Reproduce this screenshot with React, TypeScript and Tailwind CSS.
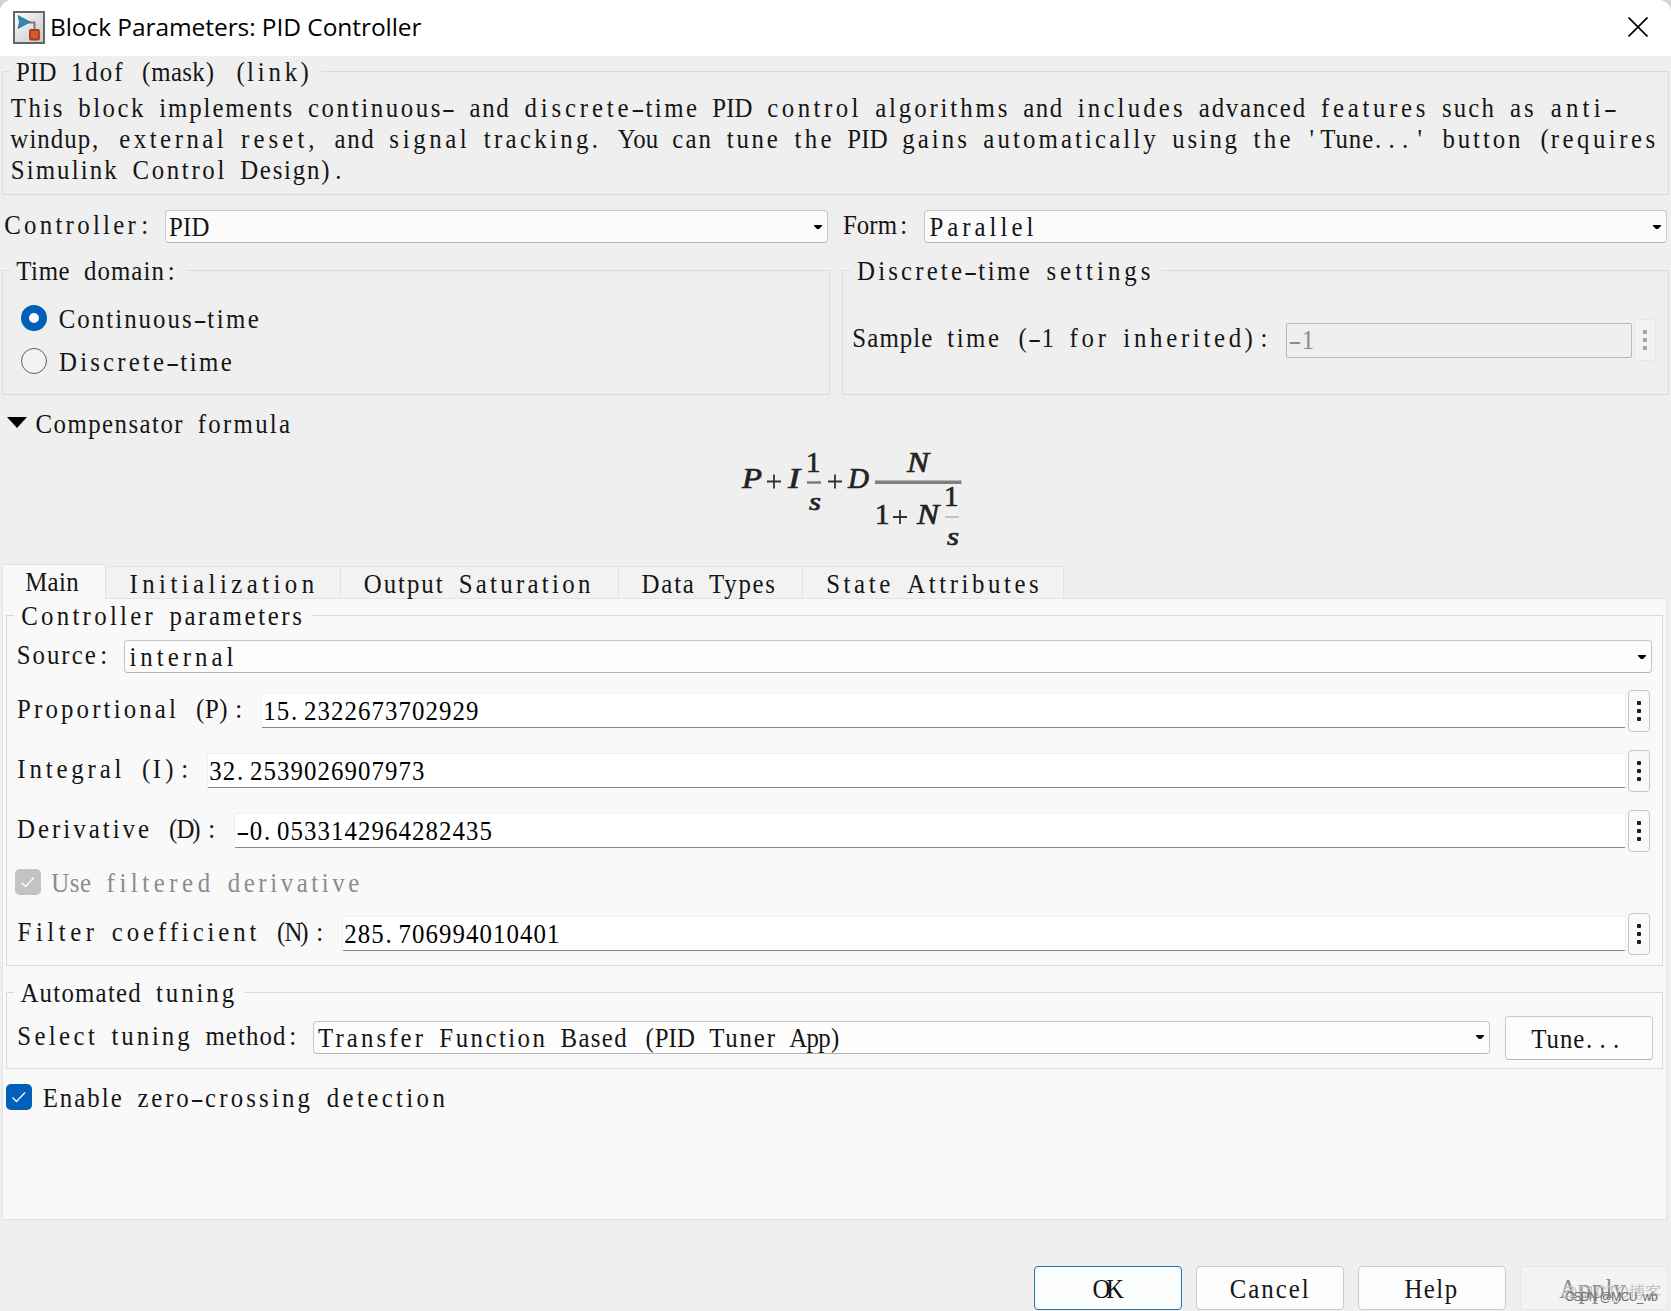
import { ReactNode } from "react";
import clsx from "clsx";

// Dialog text sits on a fixed grid: every character takes one 13.5px cell
const CELL = 13.5;
const SQUEEZE = 0.92;
const ctx = document.createElement("canvas").getContext("2d")!;

function measure(token: string) {
  ctx.font = '27px "Liberation Serif"';
  return ctx.measureText(token).width;
}

function align(token: string) {
  if (token === "(") return 0.85;
  if (token === ")" || token === "." || token === ",") return 0.15;
  if (token === ":") return 0.5;
  return 0.35;
}

function Mono({ children, className }: { children: string; className?: string }) {
  const tokens = children.match(/\w+|\s|[^\w\s]/g) ?? [];
  return (
    <span
      className={clsx("inline-block shrink-0 whitespace-pre", className)}
      style={{ width: children.length * CELL }}
    >
      <span className="-ml-px inline-block origin-left scale-x-[0.92]">
        {tokens.map((token, i) => {
          if (token === "-") {
            return (
              <span key={i} className="inline-block text-center" style={{ width: CELL / SQUEEZE }}>
                <span className="inline-block scale-x-[1.6]">-</span>
              </span>
            );
          }
          const spacing = (token.length * CELL) / SQUEEZE - measure(token);
          const each = spacing / token.length;
          const shift = each * align(token);
          return (
            <span key={i} style={{ letterSpacing: each, marginLeft: shift, marginRight: -shift }}>
              {token}
            </span>
          );
        })}
      </span>
    </span>
  );
}

function Group({ title, className, children }: { title: string; className?: string; children: ReactNode }) {
  return (
    <fieldset className={clsx("min-w-0 border border-[#dadada]", className)}>
      <legend className="ml-[7px] h-[31px] px-[7px] leading-[33px]">
        <Mono>{title}</Mono>
      </legend>
      {children}
    </fieldset>
  );
}

function Select({ value, className }: { value: string; className?: string }) {
  return (
    <div
      className={clsx(
        "flex h-[33px] min-w-0 flex-1 items-center justify-between rounded-[4px] border border-[#c6c6c6] border-b-[#b4b4b4] pl-[4px] pr-[5px]",
        className ?? "bg-[#fdfdfd]"
      )}
    >
      <Mono className="h-[31px] leading-[33px]">{value}</Mono>
      <svg width="8" height="4" viewBox="0 0 8 4">
        <path d="M0 0h8v1L5 4H3L0 1z" fill="#000" />
      </svg>
    </div>
  );
}

function MoreButton({ disabled }: { disabled?: boolean }) {
  return (
    <button
      className={clsx(
        "flex h-[42px] w-[22px] shrink-0 flex-col items-center justify-center gap-[4px] rounded-[4px] border",
        disabled ? "border-[#e6e6e6] bg-[#f3f3f3]" : "border-[#c6c6c6] bg-[#f9f9f9]"
      )}
    >
      {[0, 1, 2].map((n) => (
        <span
          key={n}
          className={clsx("size-[4px] rounded-[1px]", disabled ? "bg-[#a2a2a2]" : "bg-[#1c1c1c]")}
        />
      ))}
    </button>
  );
}

function ParamRow({ label, value, className }: { label: string; value: string; className?: string }) {
  return (
    <div className={clsx("flex h-[42px] items-center pl-[10px] pr-[12px]", className)}>
      <Mono className="pb-[4px]">{label}</Mono>
      <div className="mb-[2px] ml-[14px] mr-[2px] flex h-[35px] min-w-0 flex-1 items-center rounded-[2px] border border-[#efefef] border-b-[#868686] bg-white pl-[2px]">
        <Mono className="pt-[2px] text-black">{value}</Mono>
      </div>
      <MoreButton />
    </div>
  );
}

function Checkbox({ label, disabled, className }: { label: string; disabled?: boolean; className?: string }) {
  return (
    <label className={clsx("flex h-[26px] items-center gap-[11px]", className)}>
      <span
        className={clsx(
          "flex size-[26px] shrink-0 items-center justify-center rounded-[5px]",
          disabled ? "bg-[#c3c3c3]" : "bg-[#005fb8]"
        )}
      >
        <svg width="16" height="14" viewBox="0 0 16 14" fill="none" stroke="#fff" strokeWidth="1.3">
          <path d="M1.5 7.5l4 4L14 2.5" />
        </svg>
      </span>
      <Mono className={disabled ? "pt-[2px] text-[#8c8c8c]" : "pt-[2px]"}>{label}</Mono>
    </label>
  );
}

function Radio({ label, checked }: { label: string; checked?: boolean }) {
  return (
    <label className="flex h-[43px] items-center gap-[12px] pl-[18px]">
      <span
        className={clsx(
          "size-[26px] rounded-full",
          checked ? "border-[8px] border-[#005fb8] bg-white" : "border border-[#5f5f5f] bg-[#f3f3f3]"
        )}
      />
      <Mono className="pt-[3px]">{label}</Mono>
    </label>
  );
}

function Formula() {
  return (
    <svg width="230" height="104" viewBox="738 446 230 104" className="font-['Liberation_Serif',serif]">
      <g fill="#222" stroke="#222" strokeWidth="0.7" fontSize="29">
        <g fontStyle="italic">
          <text x="742" y="488" textLength="20" lengthAdjust="spacingAndGlyphs">P</text>
          <text x="788" y="488" textLength="12" lengthAdjust="spacingAndGlyphs">I</text>
          <text x="848" y="488">D</text>
          <text x="907" y="472" textLength="22" lengthAdjust="spacingAndGlyphs">N</text>
          <text x="917" y="524" textLength="22" lengthAdjust="spacingAndGlyphs">N</text>
          <text x="809" y="510" fontSize="26" textLength="12" lengthAdjust="spacingAndGlyphs">s</text>
          <text x="947" y="545" fontSize="26" textLength="12" lengthAdjust="spacingAndGlyphs">s</text>
        </g>
        <text x="806" y="472">1</text>
        <text x="875" y="524">1</text>
        <text x="944" y="506">1</text>
      </g>
      <path d="M767 481.5h14M774 474.5v14M828 481.5h14M835 474.5v14M893 517h14M900 510v14" stroke="#333" strokeWidth="1.8" />
      <path d="M807 482.5h14" stroke="#777" strokeWidth="2.4" />
      <path d="M875 482.2h86.5" stroke="#808080" strokeWidth="3.4" />
      <path d="M945 517h14" stroke="#b5b5b5" strokeWidth="1.5" />
    </svg>
  );
}

function BlockIcon() {
  return (
    <svg width="32" height="33" viewBox="0 0 32 33">
      <defs>
        <linearGradient id="plate" x1="0" y1="0" x2="1" y2="1">
          <stop offset="0" stopColor="#fff" />
          <stop offset="1" stopColor="#c4c4c4" />
        </linearGradient>
      </defs>
      <rect x="1" y="1" width="30" height="31" fill="url(#plate)" stroke="#666" strokeWidth="2" />
      <path d="M15 11.5h6.500V19" fill="none" stroke="#777" strokeWidth="2" />
      <path d="M5 4.500l12 6.500L5 17.500l1.500-6.500z" fill="#2f86bd" stroke="#2a6a96" strokeWidth="0.800" />
      <rect x="17" y="19" width="9" height="9.500" rx="1" fill="#d9582e" stroke="#a33c18" strokeWidth="1.800" />
    </svg>
  );
}

const TABS = [
  { label: "Initialization", width: "w-[235px]" },
  { label: "Output Saturation", width: "w-[278px]" },
  { label: "Data Types", width: "w-[184px]" },
  { label: "State Attributes", width: "w-[261px]" },
];

const DESCRIPTION = [
  "This block implements continuous- and discrete-time PID control algorithms and includes advanced features such as anti-",
  "windup, external reset, and signal tracking. You can tune the PID gains automatically using the 'Tune...' button (requires",
  "Simulink Control Design).",
];

const BUTTON = "flex w-[148px] shrink-0 items-center justify-center rounded-[4px] border pt-[2px]";

export default function App() {
  return (
    <div className="h-[1311px] w-[1671px] overflow-hidden bg-[#d4d4d4]">
      <div className="flex h-full flex-col overflow-hidden rounded-t-[12px] bg-[#efefef] font-['Liberation_Serif','Noto_Sans_CJK_SC',serif] text-[27px] leading-[32px] text-[#151515]">
        <header className="flex h-[56px] shrink-0 items-center justify-between bg-white pb-[2px] pl-[13px] pr-[23px]">
          <div className="flex items-center">
            <BlockIcon />
            <h1 className="ml-[5px] whitespace-nowrap font-['Open_Sans',sans-serif] text-[24.5px] tracking-[-0.07px] text-black">
              Block Parameters: PID Controller
            </h1>
          </div>
          <svg width="20" height="20" viewBox="0 0 20 20" stroke="#000" strokeWidth="1.7">
            <path d="M0.5 0.5l19 19M19.5 0.5l-19 19" />
          </svg>
        </header>

        <Group title="PID 1dof (mask) (link)" className="ml-[2px] mr-[2px] h-[139px] shrink-0">
          <div className="flex flex-col pl-[8px] pt-[6px]">
            {DESCRIPTION.map((line) => (
              <Mono key={line} className="leading-[31px]">{line}</Mono>
            ))}
          </div>
        </Group>

        <div className="mt-[15px] flex h-[33px] shrink-0">
          <div className="flex w-[828px] gap-[12px] pl-[4px]">
            <Mono className="leading-[31px]">Controller:</Mono>
            <Select value="PID" className="bg-[#fbfbfb]" />
          </div>
          <div className="flex flex-1 gap-[12px] pl-[16px] pr-[4px]">
            <Mono className="leading-[31px]">Form:</Mono>
            <Select value="Parallel" className="bg-[#fbfbfb]" />
          </div>
        </div>

        <div className="ml-[2px] mr-[2px] mt-[12px] grid h-[140px] shrink-0 grid-cols-2 gap-[12px]">
          <Group title="Time domain:">
            <div className="pt-[10px]">
              <Radio label="Continuous-time" checked />
              <Radio label="Discrete-time" />
            </div>
          </Group>
          <Group title="Discrete-time settings">
            <div className="flex items-center pl-[10px] pr-[12px] pt-[33px]">
              <Mono className="pb-[4px]">Sample time (-1 for inherited):</Mono>
              <div className="ml-[15px] mr-[2px] flex h-[35px] min-w-0 flex-1 items-center rounded-[2px] border border-[#b9b9b9] pl-[2px]">
                <Mono className="text-[#8c8c8c]">-1</Mono>
              </div>
              <MoreButton disabled />
            </div>
          </Group>
        </div>

        <div className="mt-[12px] flex h-[32px] shrink-0 items-center pl-[7px]">
          <svg width="20" height="11" viewBox="0 0 20 11" className="mb-[2px] mr-[9px]">
            <path d="M0 0h20L10 11z" fill="#000" />
          </svg>
          <Mono className="pt-[2px]">Compensator formula</Mono>
        </div>

        <div className="h-[125px] shrink-0 pl-[738px] pt-[7px]">
          <Formula />
        </div>

        <div className="flex h-[35px] shrink-0 items-end pl-[2px]">
          <div className="z-10 flex h-[35px] w-[104px] border border-b-0 border-[#e3e3e3] bg-[#f9f9f9] pl-[23px] leading-[34px]">
            <Mono>Main</Mono>
          </div>
          {TABS.map((tab) => (
            <div
              key={tab.label}
              className={clsx("flex h-[33px] border-r border-t border-[#e3e3e3] bg-[#f2f2f2] pl-[23px] leading-[34px]", tab.width)}
            >
              <Mono>{tab.label}</Mono>
            </div>
          ))}
        </div>

        <div className="-mt-px ml-[2px] mr-[4px] h-[622px] shrink-0 border border-[#e3e3e3] bg-[#f9f9f9] pl-[3px] pr-[3px] pt-[1px]">
          <Group title="Controller parameters" className="h-[366px]">
            <div className="flex gap-[12px] pl-[10px] pr-[10px] pt-[9px]">
              <Mono className="leading-[31px]">Source:</Mono>
              <Select value="internal" />
            </div>
            <ParamRow label="Proportional (P):" value="15.2322673702929" className="mt-[17px]" />
            <ParamRow label="Integral (I):" value="32.2539026907973" className="mt-[18px]" />
            <ParamRow label="Derivative (D):" value="-0.0533142964282435" className="mt-[18px]" />
            <Checkbox label="Use filtered derivative" disabled className="mt-[17px] pl-[8px]" />
            <ParamRow label="Filter coefficient (N):" value="285.706994010401" className="mt-[18px]" />
          </Group>

          <Group title="Automated tuning" className="mt-[11px] h-[92px]">
            <div className="flex items-center pl-[10px] pr-[9px] pt-[8px]">
              <Mono className="mr-[12px] pb-[4px]">Select tuning method:</Mono>
              <Select value="Transfer Function Based (PID Tuner App)" className="mb-[2px] bg-[#fdfdfd]" />
              <button className={clsx(BUTTON, "ml-[15px] h-[44px] border-[#cacaca] border-b-[#b4b4b4] bg-[#fdfdfd]")}>
                <Mono>Tune...</Mono>
              </button>
            </div>
          </Group>

          <Checkbox label="Enable zero-crossing detection" className="mt-[15px]" />
        </div>

        <footer className="flex shrink-0 justify-end gap-[14px] pr-[3px] pt-[46px]">
          <button className={clsx(BUTTON, "h-[44px] border-[#1a76a8] bg-[#fbfdfd]")}>
            <Mono>OK</Mono>
          </button>
          <button className={clsx(BUTTON, "h-[44px] border-[#cacaca] bg-[#fdfdfd]")}>
            <Mono>Cancel</Mono>
          </button>
          <button className={clsx(BUTTON, "h-[44px] border-[#cacaca] bg-[#fdfdfd]")}>
            <Mono>Help</Mono>
          </button>
          <button className={clsx(BUTTON, "relative h-[44px] border-[#e6e6e6] bg-[#f3f3f3] text-[#8c8c8c]")}>
            <Mono>Apply</Mono>
            <span className="absolute right-[6px] top-[10px] whitespace-nowrap font-['Liberation_Sans','Noto_Sans_CJK_SC',sans-serif] text-[16px] leading-[32px] text-[#c4c4c4]">
              @51CTO博客
            </span>
            <span className="absolute right-[10px] top-[14px] whitespace-nowrap font-['Liberation_Sans',sans-serif] text-[12px] leading-[32px] tracking-[-0.6px] text-[#6e6e6e]">
              CSDN @MCU_wb
            </span>
          </button>
        </footer>
      </div>
    </div>
  );
}
